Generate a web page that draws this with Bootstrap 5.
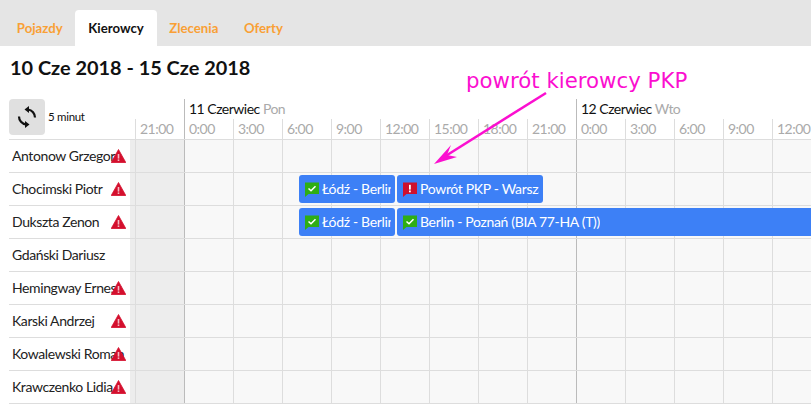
<!DOCTYPE html>
<html lang="pl">
<head>
<meta charset="utf-8">
<title>Kierowcy</title>
<link rel="stylesheet" href="https://cdn.jsdelivr.net/npm/bootstrap@5.3.0/dist/css/bootstrap.min.css">
<style>
html,body{height:405px;overflow:hidden}
body{font-family:"Lato","Liberation Sans",sans-serif;font-size:14px;color:#111;background:#fff;position:relative}
.top-tabs{background:#e5e5e5;height:46px;padding:10px 0 0 4px;border:0;gap:0;flex-wrap:nowrap}
.top-tabs .nav-link{border:0;margin:0;height:36px;padding:0 12.8px;line-height:37px;font-weight:700;font-size:13.2px;color:#f9a035;border-radius:4px 4px 0 0;background:none}
.top-tabs .nav-link.active{background:#fff;color:#111}
.range-title{font-family:"Lato",sans-serif;font-weight:700;font-size:19.9px;line-height:26px;margin:8px 0 0 10px;color:#111;white-space:nowrap}
.sched{margin-top:19px;margin-left:9px;overflow:hidden}
.sched-head{height:41px;border-bottom:1px solid #ddd}
.side-head{width:121px;flex:none;height:36px}
.refresh-btn{width:36px;height:36px;padding:0;background:#e0e0e0;border:0;border-radius:4px;flex:none}
.refresh-btn:hover{background:#e0e0e0}
.refresh-note{font-size:11.5px;letter-spacing:-.3px;margin-left:3px;white-space:nowrap}
.time-head{flex:1;min-width:0;overflow:hidden;margin-left:5px;height:40px}
.day-row{height:20px;padding-left:49px;white-space:nowrap}
.day-cell{width:392px;flex:none;height:20px;border-left:1px solid #bbb;padding-left:4px;line-height:19px;font-size:14px;letter-spacing:-.5px;color:#111}
.day-cell span{color:#aaa}
.hour-row{height:20px;white-space:nowrap}
.hour-cell{width:49px;flex:none;height:20px;border-left:1px solid #ddd;padding-left:4px;line-height:20px;font-size:14px;letter-spacing:-.5px;color:#aaa}
.hour-cell.day-start{border-left-color:#bbb}
.sched-row{height:33px;border-bottom:1px solid #ddd}
.name-cell{width:121px;flex:none;position:relative;padding-left:3px;line-height:32px;font-size:14px;letter-spacing:-.4px;color:#222;white-space:nowrap}
.name-clip{display:block;width:113px;overflow:hidden}
.warn-mark{position:absolute;left:102px;top:9px;width:15px;height:14px}
.track{flex:1;min-width:0;position:relative;overflow:hidden;background-color:#f8f8f8;
background-image:linear-gradient(#bbb,#bbb),linear-gradient(#bbb,#bbb),repeating-linear-gradient(90deg,#ddd 0 1px,transparent 1px 49px),linear-gradient(#ededed,#ededed);
background-size:1px 100%,1px 100%,100% 100%,54px 100%;background-position:54px 0,446px 0,5px 0,0 0;background-repeat:no-repeat}
.job-bar{position:absolute;top:2px;height:28px;background:#3d80f6;color:#fff;border-radius:3px;line-height:28px;padding:0 4px 0 6px;font-size:14px;letter-spacing:-.33px;white-space:nowrap;overflow:hidden;display:flex;align-items:center;gap:3px}
.job-bar svg{flex:none}
.job-clip{overflow:hidden;min-width:0}
.note-text{position:absolute;left:466px;top:66px;font-family:"DejaVu Sans",sans-serif;font-size:21.3px;line-height:30px;color:#fb0fd0;white-space:nowrap}
.note-arrow{position:absolute;left:425px;top:85px;width:130px;height:85px}
</style>
</head>
<body>
<ul class="nav nav-tabs top-tabs">
  <li class="nav-item"><a class="nav-link" href="#">Pojazdy</a></li>
  <li class="nav-item"><a class="nav-link active" href="#">Kierowcy</a></li>
  <li class="nav-item"><a class="nav-link" href="#">Zlecenia</a></li>
  <li class="nav-item"><a class="nav-link" href="#">Oferty</a></li>
</ul>
<h1 class="range-title">10 Cze 2018 - 15 Cze 2018</h1>

<svg width="0" height="0" class="d-block position-absolute">
  <defs>
    <symbol id="warn" viewBox="0 0 15 14"><path d="M7.5 .5 14.800 13.500H.2Z" fill="#d40f2d" stroke="#d40f2d" stroke-width=".8" stroke-linejoin="round"/><rect x="6.700" y="5" width="1.600" height="4.600" fill="#f3b9c2"/><rect x="6.700" y="10.400" width="1.600" height="1.600" fill="#f3b9c2"/></symbol>
    <symbol id="ok" viewBox="0 0 14 15"><path d="M0 .5H14V12H3.500L0 15Z" fill="#2fae14"/><path d="M3.500 6.500 6 8.800 10.500 4.200" fill="none" stroke="#fff" stroke-width="1.500"/></symbol>
    <symbol id="bad" viewBox="0 0 14 15"><path d="M0 .5H14V12H3.500L0 15Z" fill="#cf102d"/><rect x="6" y="2.800" width="1.800" height="4.800" fill="#fff"/><rect x="6" y="8.500" width="1.800" height="1.800" fill="#fff"/></symbol>
  </defs>
</svg>

<div class="sched">
  <div class="sched-head d-flex">
    <div class="side-head d-flex align-items-center">
      <button class="btn refresh-btn d-flex align-items-center justify-content-center" type="button" aria-label="Odśwież">
        <svg width="36" height="36" viewBox="0 0 36 36" fill="none" stroke="#111" stroke-width="2.200">
          <path d="M26 18.500A8 8 0 0 0 19 10.500"/><path d="M10 17.500A8 8 0 0 0 17 25.500"/>
          <path d="M15.500 10.500 20 7V14Z" fill="#111" stroke="none"/><path d="M20.500 25.500 16 22V29Z" fill="#111" stroke="none"/>
        </svg>
      </button>
      <span class="refresh-note">5 minut</span>
    </div>
    <div class="time-head">
      <div class="day-row d-flex">
        <div class="day-cell">11 Czerwiec <span>Pon</span></div>
        <div class="day-cell">12 Czerwiec <span>Wto</span></div>
      </div>
      <div class="hour-row d-flex">
        <div class="hour-cell">21:00</div>
        <div class="hour-cell day-start">0:00</div><div class="hour-cell">3:00</div><div class="hour-cell">6:00</div><div class="hour-cell">9:00</div><div class="hour-cell">12:00</div><div class="hour-cell">15:00</div><div class="hour-cell">18:00</div><div class="hour-cell">21:00</div>
        <div class="hour-cell day-start">0:00</div><div class="hour-cell">3:00</div><div class="hour-cell">6:00</div><div class="hour-cell">9:00</div><div class="hour-cell">12:00</div>
      </div>
    </div>
  </div>

  <div class="sched-row d-flex"><div class="name-cell"><span class="name-clip">Antonow Grzegorz</span><svg class="warn-mark"><use href="#warn"/></svg></div><div class="track"></div></div>
  <div class="sched-row d-flex"><div class="name-cell"><span class="name-clip">Chocimski Piotr</span><svg class="warn-mark"><use href="#warn"/></svg></div><div class="track">
    <div class="job-bar" style="left:169px;width:96px"><svg width="14" height="15"><use href="#ok"/></svg><span class="job-clip">Łódź - Berlin</span></div>
    <div class="job-bar" style="left:267px;width:146px"><svg width="14" height="15"><use href="#bad"/></svg><span class="job-clip">Powrót PKP - Warszawa</span></div>
  </div></div>
  <div class="sched-row d-flex"><div class="name-cell"><span class="name-clip">Dukszta Zenon</span><svg class="warn-mark"><use href="#warn"/></svg></div><div class="track">
    <div class="job-bar" style="left:169px;width:96px"><svg width="14" height="15"><use href="#ok"/></svg><span class="job-clip">Łódź - Berlin</span></div>
    <div class="job-bar" style="left:267px;width:500px"><svg width="14" height="15"><use href="#ok"/></svg><span class="job-clip">Berlin - Poznań (BIA 77-HA (T))</span></div>
  </div></div>
  <div class="sched-row d-flex"><div class="name-cell"><span class="name-clip">Gdański Dariusz</span></div><div class="track"></div></div>
  <div class="sched-row d-flex"><div class="name-cell"><span class="name-clip">Hemingway Ernest</span><svg class="warn-mark"><use href="#warn"/></svg></div><div class="track"></div></div>
  <div class="sched-row d-flex"><div class="name-cell"><span class="name-clip">Karski Andrzej</span><svg class="warn-mark"><use href="#warn"/></svg></div><div class="track"></div></div>
  <div class="sched-row d-flex"><div class="name-cell"><span class="name-clip">Kowalewski Roman</span><svg class="warn-mark"><use href="#warn"/></svg></div><div class="track"></div></div>
  <div class="sched-row d-flex"><div class="name-cell"><span class="name-clip">Krawczenko Lidia</span><svg class="warn-mark"><use href="#warn"/></svg></div><div class="track"></div></div>
</div>

<div class="note-text">powrót kierowcy PKP</div>
<svg class="note-arrow" viewBox="0 0 130 85"><path d="M121 8 19 72" stroke="#fb0fd0" stroke-width="2.500" fill="none"/><path d="M9 79 26 60 22 70 32 72Z" fill="#fb0fd0"/></svg>
<script src="https://cdn.jsdelivr.net/npm/bootstrap@5.3.0/dist/js/bootstrap.bundle.min.js"></script>
</body>
</html>
